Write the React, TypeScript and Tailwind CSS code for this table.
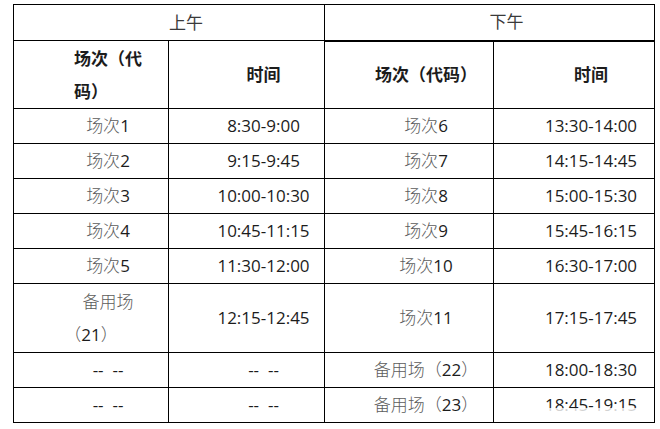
import React from 'react';

type Slot = { name: string; no: string; time: string };

const morning: Slot[] = [
  { name: '场次', no: '1', time: '8:30-9:00' },
  { name: '场次', no: '2', time: '9:15-9:45' },
  { name: '场次', no: '3', time: '10:00-10:30' },
  { name: '场次', no: '4', time: '10:45-11:15' },
  { name: '场次', no: '5', time: '11:30-12:00' },
];

const afternoon: Slot[] = [
  { name: '场次', no: '6', time: '13:30-14:00' },
  { name: '场次', no: '7', time: '14:15-14:45' },
  { name: '场次', no: '8', time: '15:00-15:30' },
  { name: '场次', no: '9', time: '15:45-16:15' },
  { name: '场次', no: '10', time: '16:30-17:00' },
];

const cell =
  'border border-black text-center align-middle indent-[34px] whitespace-nowrap py-0 px-[7px] leading-[28px]';

const Gray: React.FC<{ children: React.ReactNode }> = ({ children }) => (
  <span className="text-[#5c5c5c] font-light">{children}</span>
);

export default function App() {
  return (
    <div
      className="relative min-h-screen bg-white pl-[13px] pt-[4px] text-[17px] text-[#1c1c1c]"
      style={{ fontFamily: '"Open Sans", "Noto Sans CJK SC", sans-serif' }}
    >
      <table className="table-fixed border-collapse w-[641px]">
        <colgroup>
          <col className="w-[155px]" />
          <col className="w-[156px]" />
          <col className="w-[169px]" />
          <col className="w-[161px]" />
        </colgroup>
        <tbody>
          <tr className="h-[36px]">
            <td colSpan={2} className={`${cell} text-[#3a3a3a]`}>
              上午
            </td>
            <td colSpan={2} className={`${cell} border-b-2 text-[#3a3a3a]`}>
              下午
            </td>
          </tr>
          <tr className="h-[68px]">
            <td className={`${cell} font-bold leading-[33px]`}>
              场次（代
              <br />
              码）
            </td>
            <td className={`${cell} font-bold`}>时间</td>
            <td className={`${cell} font-bold`}>场次（代码）</td>
            <td className={`${cell} font-bold`}>时间</td>
          </tr>
          {morning.map((m, i) => {
            const a = afternoon[i];
            return (
              <tr key={m.no} className="h-[35px]">
                <td className={cell}>
                  <Gray>{m.name}</Gray>
                  {m.no}
                </td>
                <td className={cell}>{m.time}</td>
                <td className={cell}>
                  <Gray>{a.name}</Gray>
                  {a.no}
                </td>
                <td className={cell}>{a.time}</td>
              </tr>
            );
          })}
          <tr className="h-[69px]">
            <td className={`${cell} leading-[33px]`}>
              <Gray>
                备用场
                <br />
                （
              </Gray>
              21
              <Gray>）</Gray>
            </td>
            <td className={cell}>12:15-12:45</td>
            <td className={cell}>
              <Gray>场次</Gray>11
            </td>
            <td className={cell}>17:15-17:45</td>
          </tr>
          <tr className="h-[35px]">
            <td className={cell}>--&nbsp;&nbsp;--</td>
            <td className={cell}>--&nbsp;&nbsp;--</td>
            <td className={cell}>
              <Gray>备用场（</Gray>22<Gray>）</Gray>
            </td>
            <td className={cell}>18:00-18:30</td>
          </tr>
          <tr className="h-[35px]">
            <td className={cell}>--&nbsp;&nbsp;--</td>
            <td className={cell}>--&nbsp;&nbsp;--</td>
            <td className={cell}>
              <Gray>备用场（</Gray>23<Gray>）</Gray>
            </td>
            <td className={cell}>18:45-19:15</td>
          </tr>
        </tbody>
      </table>
      {/* faint watermark strip over the last cell */}
      <div className="absolute left-[510px] top-[408px] h-[11px] w-[140px] bg-white/80" />
    </div>
  );
}
